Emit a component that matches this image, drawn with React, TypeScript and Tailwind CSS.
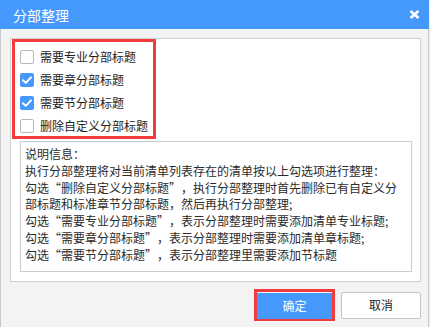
import { useState } from 'react'

// ── Data ──────────────────────────────────────────────────────────────────────

const OPTIONS = [
  { id: 'major', label: '需要专业分部标题', checked: false },
  { id: 'chapter', label: '需要章分部标题', checked: true },
  { id: 'section', label: '需要节分部标题', checked: true },
  { id: 'remove', label: '删除自定义分部标题', checked: false },
]

const HELP_LINES = [
  '说明信息：',
  '执行分部整理将对当前清单列表存在的清单按以上勾选项进行整理：',
  '勾选“删除自定义分部标题”，执行分部整理时首先删除已有自定义分',
  '部标题和标准章节分部标题，然后再执行分部整理;',
  '勾选“需要专业分部标题”，表示分部整理时需要添加清单专业标题;',
  '勾选“需要章分部标题”，表示分部整理时需要添加清单章标题;',
  '勾选“需要节分部标题”，表示分部整理里需要添加节标题',
]

// Full-width cells for quotes (the font draws them narrow)
function renderLine(line: string) {
  return line.split(/([“”])/).map((part, i) => {
    if (part === '“') return <span key={i} className="inline-block w-[12px] text-right">“</span>
    if (part === '”') return <span key={i} className="inline-block w-[12px] text-left">”</span>
    return part
  })
}

// ── Checkbox ──────────────────────────────────────────────────────────────────

function Checkbox({ checked, label, onToggle }: { checked: boolean; label: string; onToggle: () => void }) {
  return (
    <label className="flex items-center h-[14px] pl-[5px] cursor-pointer select-none" onClick={onToggle}>
      {checked ? (
        <span className="w-[14px] h-[14px] rounded-[2px] bg-[#4599fd] flex items-center justify-center">
          <svg viewBox="0 0 14 14" className="w-[14px] h-[14px]" fill="none">
            <path d="M3 7.2 L5.8 9.9 L11 4.4" stroke="#fff" strokeWidth="2" strokeLinecap="round" strokeLinejoin="round" />
          </svg>
        </span>
      ) : (
        <span className="w-[14px] h-[14px] rounded-[2px] bg-white border border-[#b9b9b9]" />
      )}
      <span className="ml-[6px] text-[12px] leading-[14px] text-[#1e1e1e]">{label}</span>
    </label>
  )
}

// ── Component ─────────────────────────────────────────────────────────────────

export default function App() {
  const [values, setValues] = useState(OPTIONS.map((o) => o.checked))

  function toggle(i: number) {
    setValues((v) => v.map((c, j) => (j === i ? !c : c)))
  }

  return (
    <div
      lang="zh-CN"
      className="w-[430px] h-[327px] bg-[#ececec] overflow-hidden"
      style={{ fontFamily: '"Noto Sans CJK SC", "Noto Sans", sans-serif' }}
    >
      <div className="w-[429px] h-[327px] flex flex-col">
        {/* Title bar */}
        <div className="h-[29px] bg-[#4599fd] flex items-center justify-between pl-[13px] pr-[9px]">
          <span className="text-white text-[14px] leading-[14px]">分部整理</span>
          <svg viewBox="0 0 11 9" className="w-[11px] h-[9px]" fill="none">
            <path d="M1.5 1 L9.5 8 M9.5 1 L1.5 8" stroke="#fff" strokeWidth="2.6" />
          </svg>
        </div>

        {/* Body */}
        <div className="flex-1 bg-[#f3f3f3] border-x border-[#c9c9c9] pt-[9px] pl-[9px] pr-[7px]">
          <div className="bg-white border border-[#d2d2d2] pl-[1px] pb-[9px]">
            {/* Options (highlighted) */}
            <div className="w-[144px] h-[100px] border-[3px] border-[#f03c3c] pt-[8px] flex flex-col gap-[9px]">
              {OPTIONS.map((o, i) => (
                <Checkbox key={o.id} label={o.label} checked={values[i]} onToggle={() => toggle(i)} />
              ))}
            </div>

            {/* Description */}
            <div className="mt-[2px] ml-[8px] w-[392px] h-[131px] border border-[#cdcdcd] pl-[4px] pt-[4px] text-[12px] leading-[16.8px] text-[#2b2b2b]">
              {HELP_LINES.map((line) => (
                <div key={line} className="whitespace-nowrap">
                  {renderLine(line)}
                </div>
              ))}
            </div>
          </div>

          {/* Footer */}
          <div className="flex items-center justify-end gap-[6px] mt-[7px]">
            <div className="w-[81px] h-[32px] border-[3px] border-[#f03c3c]">
              <button type="button" className="w-full h-full bg-[#4599fd] text-white text-[12px]">
                确定
              </button>
            </div>
            <button
              type="button"
              className="w-[80px] h-[27px] bg-white border border-[#c4c4c4] rounded-[2px] text-[12px] text-[#1e1e1e]"
            >
              取消
            </button>
          </div>
        </div>
      </div>
    </div>
  )
}
